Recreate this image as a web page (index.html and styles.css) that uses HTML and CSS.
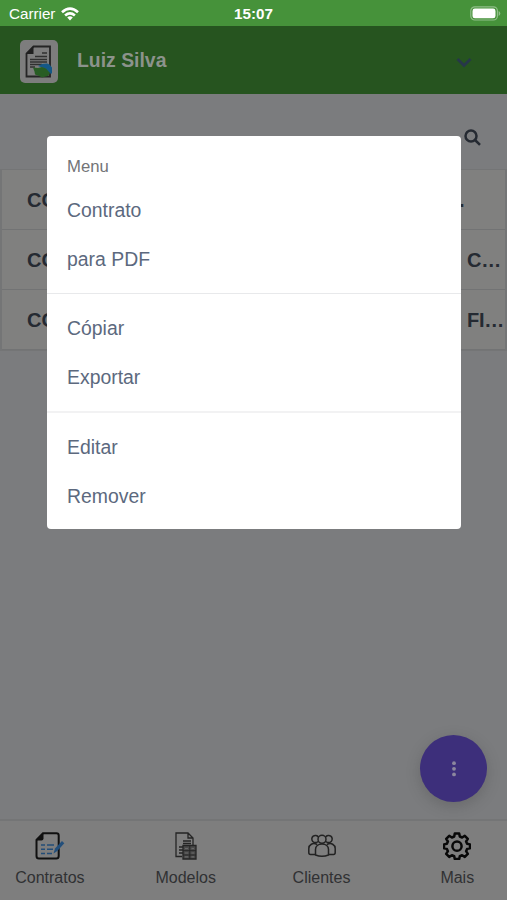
FILE: index.html
```html
<!DOCTYPE html>
<html lang="pt-BR">
<head>
<meta charset="utf-8">
<title>Contratos</title>
<link rel="stylesheet" href="styles.css">
</head>
<body>
<div class="app">
  <div class="status">
    <div class="carrier">Carrier
      <svg width="18" height="14" viewBox="0 0 18 14" fill="none" stroke="#fff" stroke-width="2.7"><path d="M1 5.2Q9-1.8 17 5.2M4.1 8.4Q9 4.2 13.9 8.4"/><path d="M6.2 10.5Q9 8.2 11.8 10.5L9 13.6z" fill="#fff" stroke="none"/></svg>
    </div>
    <div class="time">15:07</div>
    <svg class="battery" width="31" height="15" viewBox="0 0 31 15"><rect x=".8" y=".8" width="26.6" height="13.2" rx="4" fill="none" stroke="#90be89" stroke-width="1.2"/><rect x="2.5" y="2.5" width="23" height="9.8" rx="2.4" fill="#fff"/><path d="M28.6 5v5q1.7-.8 1.7-2.5T28.6 5z" fill="#90be89"/></svg>
  </div>
  <header class="header">
    <div class="logo">
      <svg width="28" height="33" viewBox="0 0 28 33"><path d="M8.500 1.500H25v30H1.500V8.500z" fill="#7d7d7d" stroke="#252525" stroke-width="1.800"/><path d="M1 9L8.500 1v8z" fill="#202020"/><path d="M17 8h5M10 11.500h12M5 14.500h17M5 17h17M5 19.500h12M5 22h5" stroke="#303030" stroke-width="1.300"/><path d="M13 21l4-2 5-.5 2.500 1 2.500 3v6h-2l-5-5z" fill="#155886"/><path d="M8 22.500l5 .5 4-1 4 1.500 4 4.500-2 3-6 1.500-4-2-3-1-.5-3z" fill="#285d24"/></svg>
    </div>
    <div class="user">Luiz Silva</div>
    <svg class="chevron" width="16" height="12" viewBox="0 0 16 12" fill="none" stroke="#27374a" stroke-width="2.8"><path d="M1.500 2L8 8.500 14.500 2"/></svg>
  </header>
  <main class="content">
    <div class="search">
      <svg width="17" height="17" viewBox="0 0 17 17" fill="none" stroke="#252a32" stroke-width="2.500"><circle cx="7" cy="7" r="5.500"/><path d="M11 11l5 4.800"/></svg>
    </div>
    <div class="list">
      <div class="row"><span>CO</span><span class="end dot">.</span></div>
      <div class="row"><span>CO</span><span class="end">C…</span></div>
      <div class="row"><span>CO</span><span class="end">FI…</span></div>
    </div>
  </main>
  <nav class="tabs">
    <div class="tab">
      <svg width="30" height="28" viewBox="0 0 30 28" fill="none"><path d="M8 1.300h13.500q2.200 0 2.200 2.200V24q0 2.500-2.500 2.500H4q-2.500 0-2.500-2.500V8z" stroke="#101010" stroke-width="2"/><path d="M1 8.500L8.500 1v5.500q0 2-2 2z" fill="#101010"/><path d="M6 13h4m2 0h7M6 17.300h4m2 0h6M6 21.500h4m2 0h5" stroke="#234d78" stroke-width="1.400"/><path d="M18.500 21.500l1.500-5 7-7.500 2.300 2.300-7 7.700z" fill="#234f7b"/></svg>
      <span>Contratos</span>
    </div>
    <div class="tab">
      <svg width="24" height="28" viewBox="0 0 24 28" fill="none" stroke="#252525" stroke-width="1.300"><path d="M8 24.500H2V1h12l5 5v7M14 1v5h5M9 9h8M9 11.500h8M5 15h4M5 18h4M5 21h4"/><path d="M9 13.500h13v13.500H9z" fill="#4a4a4a"/><path d="M11 16.500h3m3.500 0h2.500M11 21h3m3.500 0h2.500M11 24.800h3m3.500 0h2.500" stroke="#686868" stroke-width="1.200"/><path d="M15.800 14v13M9 18.700h13M9 23h13" stroke-width="1"/></svg>
      <span>Modelos</span>
    </div>
    <div class="tab">
      <svg class="people" width="28" height="28" viewBox="0 0 28 28" fill="none" stroke="#222" stroke-width="1.500"><circle cx="14" cy="7.300" r="4"/><path d="M10 9.500a3.600 3.600 0 1 1 .4-4.500M18 9.500a3.600 3.600 0 1 0-.4-4.500M7.500 23v-5.500c0-7.500 13-7.500 13 0V23q-6.500 2.500-13 0zM7.300 22.500H2.500q-1.700 0-1.700-2v-4c0-3.500 4-6.500 8.200-4M20.700 22.500h4.800q1.700 0 1.700-2v-4c0-3.500-4-6.500-8.200-4"/></svg>
      <span>Clientes</span>
    </div>
    <div class="tab">
      <svg width="28" height="28" viewBox="0 0 28 28" fill="none" stroke="#080808" stroke-width="2.500" stroke-linejoin="round"><path d="M11.800 1.500h4.400l.6 3 2.300 1 2.700-1.700 3 3-1.700 2.700 1 2.300 2.900.6v3.900l-2.900.6-1 2.300 1.700 2.700-3 3-2.700-1.700-2.300 1-.6 2.900h-4.400l-.6-2.900-2.300-1-2.700 1.700-3-3 1.700-2.700-1-2.300-2.900-.6v-3.900l2.900-.6 1-2.300-1.700-2.700 3-3 2.700 1.700 2.300-1z"/><circle cx="14" cy="14.200" r="4.600"/></svg>
      <span>Mais</span>
    </div>
  </nav>
  <div class="fab"><svg width="6" height="18" viewBox="0 0 6 18" fill="#8c879e"><circle cx="3" cy="3.200" r="1.900"/><circle cx="3" cy="8.800" r="1.900"/><circle cx="3" cy="14.400" r="1.900"/></svg></div>
  <div class="menu">
    <div class="title">Menu</div>
    <div class="item">Contrato</div>
    <div class="item">para PDF</div>
    <div class="divider"></div>
    <div class="item">Cópiar</div>
    <div class="item">Exportar</div>
    <div class="divider last"></div>
    <div class="item">Editar</div>
    <div class="item">Remover</div>
  </div>
</div>
</body>
</html>
```
FILE: styles.css
```css
* { box-sizing: border-box; }
body { margin: 0; font-family: "Liberation Sans", Arial, sans-serif; }
svg { display: block; flex: none; }
.app { position: relative; display: flex; flex-direction: column; height: 900px; overflow: hidden; background: #7b7c7e; }
.status { display: grid; grid-template-columns: 1fr auto 1fr; align-items: center; height: 26px; padding: 1px 6px 0 9px; background: #46923a; color: #fff; font-size: 15.2px; }
.carrier { display: flex; align-items: center; gap: 6px; }
.time { margin-right: 3px; font-weight: bold; }
.battery { justify-self: end; }
.header { display: flex; align-items: center; height: 68px; padding: 2px 35px 0 20px; background: #26541f; }
.logo { display: flex; align-items: center; justify-content: center; width: 38px; height: 43px; border-radius: 5px; background: #7d7d7d; }
.user { flex: 1; margin: -2px 0 0 19px; color: #8c938c; font-size: 19.4px; font-weight: bold; }
.chevron { margin-top: 3px; }
.content { flex: 1; }
.search { display: flex; justify-content: flex-end; height: 75px; padding: 35px 26px 0 0; }
.list { border: solid #747576; border-width: 1px 2px; }
.row { display: flex; align-items: center; justify-content: space-between; height: 60px; padding: 2px 5px 0 25px; border-bottom: 1px solid #727374; background: #80807f; color: #252a32; font-size: 20px; font-weight: bold; }
.end { width: 33px; white-space: nowrap; letter-spacing: -.2px; }
.end.dot { width: 41px; }
.tabs { display: grid; grid-template-columns: repeat(4, 135.8px); width: 543.2px; height: 81px; margin-left: -18px; border-top: 2px solid #747576; background: #7e7e7e; }
.tab { display: flex; flex-direction: column; align-items: center; padding-top: 11px; color: #303133; font-size: 16px; line-height: 20px; }
.tab span { margin-top: 8px; }
.people { margin-left: 1px; }
.fab { position: absolute; left: 420px; top: 735px; display: flex; align-items: center; justify-content: center; width: 67px; height: 67px; border-radius: 50%; background: #3d2f7b; box-shadow: 0 4px 14px rgba(50, 50, 50, .25); }
.menu { position: absolute; left: 47px; top: 136px; width: 414px; height: 393px; padding-top: 11px; border-radius: 4px; background: #fff; color: #5c697e; }
.title { height: 39px; padding-left: 20px; color: #737477; font-size: 16.7px; line-height: 39px; }
.item { height: 49px; padding-left: 20px; font-size: 19.4px; line-height: 49px; }
.divider { height: 1px; margin: 9px 0 10px; background: #e8e9eb; }
.divider.last { height: 2px; background: #f2f2f3; }
```
